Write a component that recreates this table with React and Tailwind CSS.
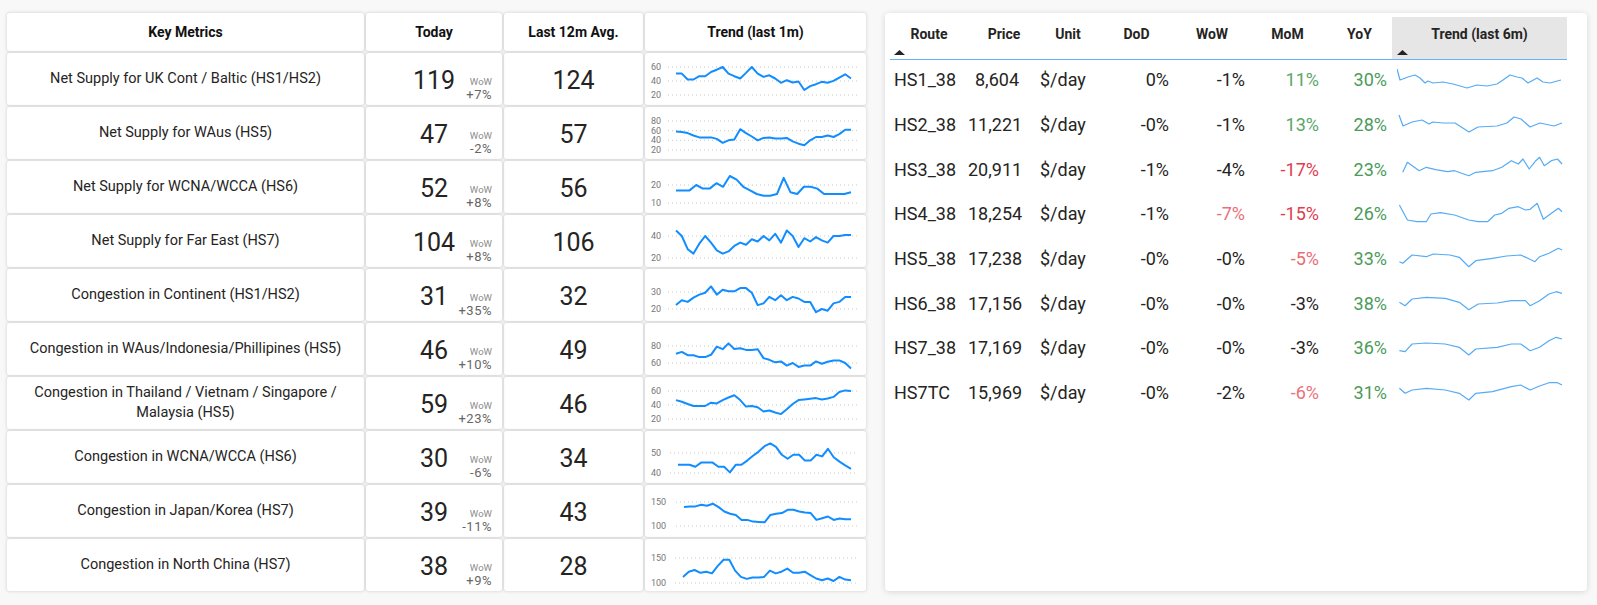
import React from 'react'

const metrics = [
  {
    label: 'Net Supply for UK Cont / Baltic (HS1/HS2)', today: 119, wow: '+7%', avg: 124,
    ticks: [60, 40, 20], yTop: 14, yBot: 42, x0: 31,
    data: [50.6, 50.6, 42.1, 42.1, 46.8, 46.8, 52.9, 56.2, 60, 50.6, 46.8, 43.5, 51.5, 60, 50.6, 45.9, 48.2, 43.5, 37.4, 41.2, 37.9, 39.3, 27.1, 32.7, 35.5, 38.8, 37.4, 40.2, 44.9, 49.6, 43.5],
  },
  {
    label: 'Net Supply for WAus (HS5)', today: 47, wow: '-2%', avg: 57,
    ticks: [80, 60, 40, 20], yTop: 14, yBot: 43, x0: 31,
    data: [58, 57, 55, 50, 46, 46, 46, 43, 35, 40, 42, 63, 55, 48, 40, 45, 46, 44, 44, 45, 38, 33, 30, 40, 47, 47, 50, 47, 53, 62, 62],
  },
  {
    label: 'Net Supply for WCNA/WCCA (HS6)', today: 52, wow: '+8%', avg: 56,
    ticks: [20, 10], yTop: 24, yBot: 42, x0: 31,
    data: [17, 17, 17, 20, 18, 18, 21, 19, 25, 23, 19, 17, 15, 14, 14, 15, 24, 16, 15, 19, 19, 18, 15, 15, 15, 15, 16],
  },
  {
    label: 'Net Supply for Far East (HS7)', today: 104, wow: '+8%', avg: 106,
    ticks: [40, 20], yTop: 21, yBot: 43, x0: 31,
    data: [45, 40, 28, 24, 33, 40, 34, 27, 24, 26, 31, 34, 32, 37, 35, 40, 36, 42, 34, 45, 40, 30, 38, 35, 39, 36, 34, 40, 40, 41, 41],
  },
  {
    label: 'Congestion in Continent (HS1/HS2)', today: 31, wow: '+35%', avg: 32,
    ticks: [30, 20], yTop: 23, yBot: 40, x0: 31,
    data: [22.3, 25.2, 24.2, 26.7, 28.5, 29.6, 33.3, 28.5, 31.3, 30.4, 30.4, 32.3, 32.3, 29.6, 22.3, 23.3, 27.1, 25.2, 28.1, 25.2, 27.1, 26.2, 24.2, 24.2, 18.1, 20, 19, 23.3, 24.2, 27.1, 27.1],
  },
  {
    label: 'Congestion in WAus/Indonesia/Phillipines (HS5)', today: 46, wow: '+10%', avg: 49,
    ticks: [80, 60], yTop: 23, yBot: 40, x0: 31,
    data: [70.8, 73.1, 69.2, 69.2, 66.9, 66.9, 69.6, 79.2, 76.2, 83.1, 76.5, 77.3, 75.4, 75.4, 76.2, 65.8, 63.8, 60.8, 61.9, 56.9, 60, 55.4, 56.9, 56.9, 61.9, 59.2, 61.5, 63.1, 63.1, 60, 53.5],
  },
  {
    label: ['Congestion in Thailand / Vietnam / Singapore /', 'Malaysia (HS5)'], today: 59, wow: '+23%', avg: 46,
    ticks: [60, 40, 20], yTop: 14, yBot: 42, x0: 31,
    data: [47, 44.7, 41.4, 38.6, 38.6, 38.6, 43.3, 42.3, 47, 50.7, 54, 47, 37.7, 38.6, 36.7, 30.7, 32.1, 29.3, 27, 34, 41.4, 47, 47.9, 48.8, 49.8, 47.9, 49.3, 51.6, 58.6, 60.9, 60],
  },
  {
    label: 'Congestion in WCNA/WCCA (HS6)', today: 30, wow: '-6%', avg: 34,
    ticks: [50, 40], yTop: 22, yBot: 42, x0: 33,
    data: [44.1, 44.1, 44.1, 43.1, 45.2, 45.2, 45.2, 43.1, 43.1, 40.3, 44.1, 44.1, 46.2, 48.6, 50.7, 53.4, 54.8, 53.1, 49.1, 47.1, 49.1, 49.1, 46.2, 46.2, 49.1, 48.3, 52.1, 47.9, 45.7, 43.8, 42.1],
  },
  {
    label: 'Congestion in Japan/Korea (HS7)', today: 39, wow: '-11%', avg: 43,
    ticks: [150, 100], yTop: 17, yBot: 41, x0: 39,
    data: [139.4, 140.8, 140.8, 144.4, 142.3, 146.5, 139.4, 130.3, 125.4, 123.2, 112.7, 112.7, 109.2, 108.5, 107.7, 123.2, 125.4, 126.8, 133.8, 133.8, 130.3, 128.2, 126.8, 112.7, 116.2, 119.7, 112.7, 115.5, 114.1, 114.1],
  },
  {
    label: 'Congestion in North China (HS7)', today: 38, wow: '+9%', avg: 28,
    ticks: [150, 100], yTop: 19, yBot: 44, x0: 38,
    data: [112.3, 122.6, 126, 120.5, 122.6, 119.2, 134.2, 146.6, 146.6, 124.7, 112.3, 108.2, 111, 111, 112.3, 124.7, 119.2, 122.6, 128.8, 120.5, 120.5, 122.6, 115.8, 108.9, 105.5, 108.9, 104.1, 112.3, 106.8, 105.5],
  },
]

const routes = [
  { route: 'HS1_38', price: '8,604', dod: '0%', wow: '-1%', mom: '11%', yoy: '30%', momC: 'text-[#5aa669]', wowC: '',
    spark: [[0, 4], [3, 15], [11, 12], [18, 10], [23, 13], [28, 18], [31, 16], [36, 18], [46, 17], [56, 19], [70, 23], [80, 20], [90, 21], [100, 19], [106, 15], [113, 10], [120, 12], [125, 13], [131, 18], [140, 13], [146, 17], [153, 18], [164, 15]] },
  { route: 'HS2_38', price: '11,221', dod: '-0%', wow: '-1%', mom: '13%', yoy: '28%', momC: 'text-[#5aa669]', wowC: '',
    spark: [[2, 5], [6, 16], [15, 12], [25, 10], [32, 14], [36, 12], [46, 13], [58, 13], [72, 22], [81, 17], [100, 16], [110, 13], [117, 7], [124, 9], [133, 17], [143, 13], [157, 16], [165, 13]] },
  { route: 'HS3_38', price: '20,911', dod: '-1%', wow: '-4%', mom: '-17%', yoy: '23%', momC: 'text-[#de3d4d]', wowC: '',
    spark: [[5.7, 18.3], [10.4, 8.3], [22.2, 16.7], [29.3, 13.3], [38.7, 15.7], [50.5, 17.7], [57.6, 16.7], [71.8, 21.7], [78.8, 18.3], [95.4, 16.7], [104.8, 13.3], [114.3, 6.7], [121.3, 10], [126, 5], [132.2, 15], [138.8, 6.7], [142.6, 3.3], [147.3, 11.7], [154.4, 6.7], [160.5, 5], [165, 10]] },
  { route: 'HS4_38', price: '18,254', dod: '-1%', wow: '-7%', mom: '-15%', yoy: '26%', momC: 'text-[#de3d4d]', wowC: 'text-[#e8707a]',
    spark: [[2.4, 6], [10.4, 21], [19.9, 22.7], [29.3, 22.7], [34, 15], [43.5, 13.7], [57.6, 16], [71.8, 21], [81.2, 22.7], [90.6, 22.7], [97.7, 16], [104.8, 14.3], [111.9, 9.3], [121.3, 7.7], [128.4, 11], [133.1, 10.3], [140.2, 4.3], [146.3, 20.3], [154.4, 14.3], [161.4, 9.3], [165, 12.7]] },
  { route: 'HS5_38', price: '17,238', dod: '-0%', wow: '-0%', mom: '-5%', yoy: '33%', momC: 'text-[#e86d76]', wowC: '',
    spark: [[2.4, 17.7], [5.7, 19.3], [15.1, 11], [29.3, 12.7], [36.4, 10], [52.9, 11], [62.3, 13.3], [71.8, 22.7], [78.8, 16.7], [95.4, 14.3], [109.6, 12], [123.7, 11], [130.8, 14.3], [137.9, 17.7], [142.6, 12.7], [152, 9.3], [161.4, 4.3], [165, 6]] },
  { route: 'HS6_38', price: '17,156', dod: '-0%', wow: '-0%', mom: '-3%', yoy: '38%', momC: '', wowC: '',
    spark: [[2.4, 14.3], [8.1, 17.7], [15.1, 11], [29.3, 9.3], [48.2, 10.3], [62.3, 14.3], [71.8, 21.7], [81.2, 16], [100.1, 15], [114.3, 12.7], [128.4, 12.7], [133.1, 17.7], [142.6, 12.7], [152, 6], [159.1, 3.7], [165, 5.3]] },
  { route: 'HS7_38', price: '17,169', dod: '-0%', wow: '-0%', mom: '-3%', yoy: '36%', momC: '', wowC: '',
    spark: [[2.4, 17.7], [8.1, 18.7], [15.1, 11], [29.3, 10], [48.2, 11], [62.3, 14.3], [71.8, 22], [78.8, 16], [100.1, 14.3], [114.3, 11], [123.7, 11], [133.1, 17.7], [142.6, 14.3], [152, 7.7], [159.1, 4.3], [165, 6]] },
  { route: 'HS7TC', price: '15,969', dod: '-0%', wow: '-2%', mom: '-6%', yoy: '31%', momC: 'text-[#e8727b]', wowC: '',
    spark: [[2.4, 10.3], [8.1, 15.3], [15.1, 12], [29.3, 10.3], [48.2, 12], [62.3, 15.3], [71.8, 22], [78.8, 15.3], [95.4, 13.7], [114.3, 8.7], [123.7, 7], [133.1, 12], [142.6, 8], [152, 4.7], [160.5, 4.7], [165, 7]] },
]

const cell = 'bg-white rounded-[3px] shadow-[0_0_3px_1px_rgba(0,0,0,0.1)]'

const Trend = ({ m }) => {
  const top = m.ticks[0]
  const bot = m.ticks[m.ticks.length - 1]
  const yOf = (v) => m.yTop + ((top - v) / (top - bot)) * (m.yBot - m.yTop)
  const step = (206 - m.x0) / (m.data.length - 1)
  const pts = m.data.map((v, i) => `${(m.x0 + i * step).toFixed(1)},${yOf(v).toFixed(1)}`).join(' ')
  return (
    <svg width="221" height="52" viewBox="0 0 221 52" className="block">
      {m.ticks.map((t) => (
        <g key={t}>
          <text x="6" y={yOf(t) + 3} fontSize="9" fill="#777" fontFamily="Roboto, sans-serif">{t}</text>
          <line x1={m.x0 - 8} x2="213" y1={yOf(t)} y2={yOf(t)} stroke="#c9c9c9" strokeDasharray="1 3" />
        </g>
      ))}
      <polyline points={pts} fill="none" stroke="#118dff" strokeWidth="2" strokeLinejoin="round" />
    </svg>
  )
}

const Arrow = () => (
  <svg width="11" height="5" viewBox="0 0 11 5" className="block">
    <path d="M0 5 L5.5 0 L11 5 Z" fill="#252423" />
  </svg>
)

const App = () => {
  return (
    <div className="w-[1597px] h-[605px] overflow-hidden bg-[#f8f8f9] [font-family:Roboto,sans-serif] text-[#252423] flex items-start pt-[13px] pl-[7px]">

      {/* Key metrics */}
      <div className="grid grid-cols-[357px_136px_139px_221px] grid-rows-[38px_repeat(10,52px)] gap-[2px]">
        {['Key Metrics', 'Today', 'Last 12m Avg.', 'Trend (last 1m)'].map((h) => (
          <div key={h} className={`${cell} flex items-center justify-center text-[14px] font-bold text-[#111]`}>{h}</div>
        ))}

        {metrics.map((m, i) => (
          <React.Fragment key={i}>
            <div className={`${cell} flex items-center justify-center text-center text-[14.5px] leading-[20px] px-3`}>
              {Array.isArray(m.label) ? <p>{m.label[0]}<br />{m.label[1]}</p> : <p>{m.label}</p>}
            </div>
            <div className={`${cell} relative flex items-center justify-center pt-[4px]`}>
              <span className="text-[25px]">{m.today}</span>
              <div className="absolute right-[10px] bottom-[4px] flex flex-col items-end leading-none">
                <span className="text-[9.5px] text-[#8a8a8a] mb-[2px]">WoW</span>
                <span className="text-[13px] text-[#666] tracking-[0.5px]">{m.wow}</span>
              </div>
            </div>
            <div className={`${cell} flex items-center justify-center pt-[4px]`}>
              <span className="text-[25px]">{m.avg}</span>
            </div>
            <div className={cell}>
              <Trend m={m} />
            </div>
          </React.Fragment>
        ))}
      </div>

      {/* Route prices */}
      <div className="ml-[19px] w-[702px] h-[578px] bg-white rounded-[4px] shadow-[0_1px_6px_rgba(0,0,0,0.14)] pt-[4px] pl-[5px]">
        <div className="w-[677px]">
          <div className="grid grid-cols-[78px_72px_56px_81px_76px_74px_65px_175px] h-[43px] border-b border-[#62b3f5] text-[14px] font-bold">
            <div className="flex flex-col pt-[7px]">
              <span className="text-center">Route</span>
              <span className="pl-[4px] mt-[5px]"><Arrow /></span>
            </div>
            <div className="text-center pt-[7px]">Price</div>
            <div className="text-center pt-[7px]">Unit</div>
            <div className="text-center pt-[7px]">DoD</div>
            <div className="text-center pt-[7px] pr-[6px]">WoW</div>
            <div className="text-center pt-[7px] pr-[5px]">MoM</div>
            <div className="text-center pt-[7px]">YoY</div>
            <div className="flex flex-col pt-[7px] bg-[#e6e6e6]">
              <span className="text-center">Trend (last 6m)</span>
              <span className="pl-[5px] mt-[5px]"><Arrow /></span>
            </div>
          </div>

          {routes.map((r) => (
            <div key={r.route} className="grid grid-cols-[78px_72px_56px_81px_76px_74px_65px_175px] h-[44.7px] items-center text-[18px] pb-[5px]">
              <span className="pl-[4px]">{r.route}</span>
              <span className="text-right mr-[21px]">{r.price}</span>
              <span>$/day</span>
              <span className="text-right pr-[8px]">{r.dod}</span>
              <span className={`text-right pr-[8px] ${r.wowC}`}>{r.wow}</span>
              <span className={`text-right pr-[8px] ${r.momC}`}>{r.mom}</span>
              <span className="text-right pr-[5px] text-[#4b9b5a]">{r.yoy}</span>
              <span className="pl-[5px]">
                <svg width="168" height="30" viewBox="0 0 168 30" className="block">
                  <polyline points={r.spark.map((p) => p.join(',')).join(' ')} fill="none" stroke="#55abf5" strokeWidth="1.2" strokeLinejoin="round" />
                </svg>
              </span>
            </div>
          ))}
        </div>
      </div>
    </div>
  )
}

export default App
